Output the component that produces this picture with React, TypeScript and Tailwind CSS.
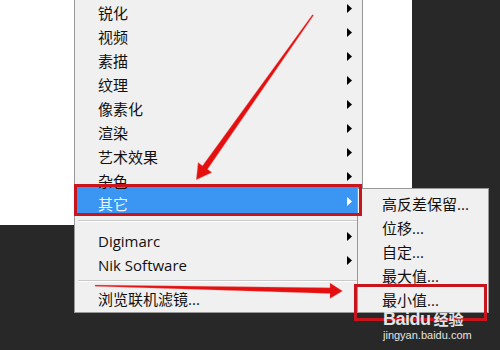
import React from "react";

const mainItems = ["锐化", "视频", "素描", "纹理", "像素化", "渲染", "艺术效果", "杂色"];
const subItems = ["高反差保留...", "位移...", "自定...", "最大值...", "最小值..."];

function Caret({ white }: { white?: boolean }) {
  return (
    <svg width="5" height="9" viewBox="0 0 5 9" className="ml-auto mr-[10px] self-start mt-[3px] shrink-0">
      <polygon points="0,0 5,4.5 0,9" fill={white ? "#ffffff" : "#000000"} />
    </svg>
  );
}

function Row({ label, arrow }: { label: string; arrow?: boolean }) {
  return (
    <div className="flex items-center h-[24px] pl-[23px]">
      <span>{label}</span>
      {arrow ? <Caret /> : null}
    </div>
  );
}

function Separator({ top, bottom }: { top: string; bottom: string }) {
  return (
    <div className={`${top} ${bottom}`}>
      <div className="h-px bg-[#c9c9c9] border-b border-white ml-[3px] mr-[3px] box-content" />
    </div>
  );
}

export default function App() {
  return (
    <div
      className="relative w-[500px] h-[350px] overflow-hidden bg-[#282828] text-[15px] leading-none text-[#111]"
      style={{ fontFamily: '"Open Sans", "Noto Sans CJK SC", sans-serif' }}
    >
      <div className="w-[412px] h-[225px] bg-white" />

      {/* main filter menu */}
      <div className="absolute left-[74px] top-0 w-[289px] bg-[#f0f0f0] border-l border-r border-b border-[#989898] pt-[1px] pb-[1px]">
        {mainItems.map((m) => (
          <Row key={m} label={m} arrow />
        ))}
        <div className="flex items-center h-[26px] -mt-[6px] pt-[8px] pl-[22px] mx-[1px] bg-[#3a96f2] text-[#eef5ff]">
          <span>其它</span>
          <svg width="5" height="9" viewBox="0 0 5 9" className="ml-auto mr-[9px] self-start mt-[2px] shrink-0">
            <polygon points="0,0 5,4.5 0,9" fill="#ffffff" />
          </svg>
        </div>
        <Separator top="pt-[7px]" bottom="pb-[7px]" />
        <Row label="Digimarc" arrow />
        <Row label="Nik Software" arrow />
        <Separator top="pt-[3px]" bottom="pb-[5px]" />
        <Row label="浏览联机滤镜..." />
      </div>

      {/* submenu */}
      <div className="absolute left-[357px] top-[188px] w-[132px] bg-[#f0f0f0] border border-[#989898] pt-[3px]">
        {subItems.map((s) => (
          <div key={s} className="flex items-center h-[24px] pl-[24px]">
            <span>{s}</span>
          </div>
        ))}
      </div>

      {/* red annotation boxes */}
      <div className="absolute left-[74px] top-[184px] w-[288px] h-[32px] border-[3px] border-[#c8141c]" />
      <div className="absolute left-[354px] top-[284px] w-[133px] h-[37px] border-[3px] border-[#c8141c]" />

      {/* red arrows */}
      <svg className="absolute left-0 top-0 pointer-events-none" width="500" height="350" viewBox="0 0 500 350">
        <polygon
          points="313.6,15.3 207.5,169.2 211.9,172.4 196.3,179.8 198.1,162.6 202.5,165.8 312.4,14.7"
          fill="#e40f0f"
          stroke="#f08080"
          strokeOpacity="0.45"
          strokeWidth="1"
          strokeLinejoin="round"
        />
        <polygon
          points="95,285 330,287.8 330,283 342.5,291 330,298.5 330,293.6 95,286.2"
          fill="#e40f0f"
          stroke="#f08080"
          strokeOpacity="0.4"
          strokeWidth="0.8"
          strokeLinejoin="round"
        />
      </svg>

      {/* watermark */}
      <div className="absolute left-[383px] top-[310px] flex flex-col items-start text-[#e4e4e4]">
        <div className="flex items-center">
          <span className="text-[18px] leading-[18px] font-bold tracking-[-0.5px]" style={{ fontFamily: '"Liberation Sans", sans-serif' }}>
            Baidu
          </span>
          <span className="text-[15px] leading-[18px] font-bold ml-[3px]" style={{ fontFamily: '"Noto Sans CJK SC", sans-serif' }}>
            经验
          </span>
        </div>
        <span className="text-[11px] mt-[2px] leading-none" style={{ fontFamily: '"Liberation Sans", sans-serif' }}>
          jingyan.baidu.com
        </span>
      </div>
    </div>
  );
}
